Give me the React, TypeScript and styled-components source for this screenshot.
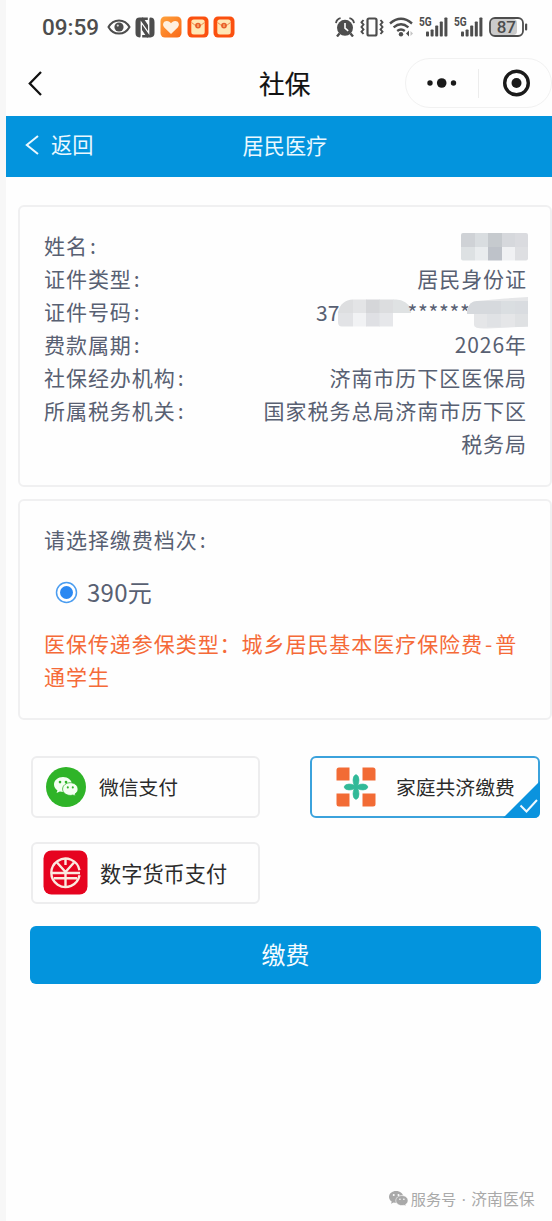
import React from 'react';
import styled, { createGlobalStyle } from 'styled-components';

const Global = createGlobalStyle`
  * { box-sizing: border-box; }
  html, body { margin: 0; padding: 0; background: #f7f7f7; }
  body { font-family: "Noto Sans CJK SC", sans-serif; overflow: hidden; }
  svg { display: block; flex: none; }
`;

const BLUE = '#0394dd';

const Page = styled.div`
  width: 546px;
  height: 1221px;
  margin-left: 6px;
  background: #fefefe;
  display: flex;
  flex-direction: column;
`;

const StatusBar = styled.div`
  height: 54px;
  flex: none;
  display: flex;
  align-items: center;
  justify-content: space-between;
  padding: 0 24px 0 36px;
`;

const StatusGroup = styled.div<{ $gap: number }>`
  display: flex;
  align-items: center;
  gap: ${(p) => p.$gap}px;
`;

const Clock = styled.span`
  font: 500 22.5px/28px Roboto, sans-serif;
  color: #4d4d4d;
  width: 60px;
  white-space: nowrap;
`;

const NavBar = styled.div`
  height: 62px;
  flex: none;
  display: grid;
  grid-template-columns: 231px auto 1fr;
  align-items: center;
  padding: 0 0 4px 22px;
`;

const NavTitle = styled.h1`
  margin: 0;
  font-size: 25.7px;
  font-weight: 400;
  -webkit-text-stroke: 0.2px #111;
  line-height: 36px;
  padding-bottom: 1px;
  color: #111;
`;

const Capsule = styled.div`
  justify-self: end;
  width: 147px;
  height: 50px;
  border: 1px solid #f1f1f1;
  border-radius: 25px;
  display: flex;
  align-items: center;
`;

const BlueBar = styled.div`
  height: 61px;
  flex: none;
  background: ${BLUE};
  color: #eaf8ff;
  display: grid;
  grid-template-columns: 236.5px auto 1fr;
  align-items: center;
  padding-bottom: 4px;
  font-size: 21.2px;
  line-height: 30px;
`;

const Back = styled.div`
  display: flex;
  align-items: center;
  gap: 12px;
  padding-left: 19px;
`;

const BackText = styled.span`
  padding-bottom: 1px;
`;

const Card = styled.section<{ $h: number; $top: number }>`
  height: ${(p) => p.$h}px;
  flex: none;
  margin: ${(p) => p.$top}px 0 0 12px;
  border: 2px solid #f0f0f1;
  border-radius: 6px;
  padding: 22px 23px 0 24px;
  color: #586072;
  font-size: 21px;
  letter-spacing: 0.95px;
  line-height: 33px;
`;

const InfoRow = styled.div<{ $lines?: number }>`
  display: flex;
  height: ${(p) => (p.$lines ?? 1) * 33}px;
  justify-content: space-between;
  align-items: flex-start;
`;

const Label = styled.span`
  white-space: nowrap;
`;

const Colon = styled.span`
  padding-left: 2px;
`;

const Value = styled.span`
  max-width: 272px;
  min-height: 33px;
  display: flex;
  align-items: center;
  text-align: right;
`;

const MaskedValue = styled.span`
  display: flex;
  align-items: center;
  margin-right: -1px;
  padding-top: 2px;
`;

const IdPrefix = styled.span`
  width: 22px;
  height: 33px;
  margin-top: -2px;
  letter-spacing: 0;
`;

const Stars = styled.span`
  width: 56px;
  height: 33px;
  margin-top: -2px;
  font-size: 21px;
  letter-spacing: 0.7px;
  white-space: nowrap;
  display: flex;
  justify-content: center;
`;

const RadioRow = styled.label`
  display: flex;
  align-items: center;
  gap: 9px;
  margin: 19px 0 18px 11px;
  height: 34px;
  font-size: 24px;
  letter-spacing: 0.3px;
`;

const RadioText = styled.span`
  padding-bottom: 2px;
`;

const Notice = styled.p`
  margin: 0 -3px 0 0;
  color: #f56a38;
`;

const Dash = styled.span`
  padding: 0 2px;
`;

const PayGrid = styled.div`
  flex: none;
  margin: 36px 12px 0 25px;
  display: grid;
  grid-template-columns: 229px 230px;
  justify-content: space-between;
  row-gap: 24px;
`;

const PayOption = styled.button<{ $selected?: boolean; $pad: number; $gap: number; $size: number }>`
  position: relative;
  height: 62px;
  border: 2px solid ${(p) => (p.$selected ? '#3ba2dc' : '#ededee')};
  border-radius: 6px;
  background: #fefefe;
  display: flex;
  align-items: center;
  gap: ${(p) => p.$gap}px;
  padding: 0 0 1px ${(p) => p.$pad}px;
  font-family: inherit;
  font-size: ${(p) => p.$size}px;
  line-height: 30px;
  color: #2b2b2b;
  white-space: nowrap;
`;

const Corner = styled.svg`
  position: absolute;
  right: -2px;
  bottom: -2px;
`;

const Submit = styled.button`
  flex: none;
  height: 58px;
  margin: 22px 11px 0 24px;
  border: 0;
  border-radius: 6px;
  background: ${BLUE};
  color: #f4fbff;
  font-family: inherit;
  font-size: 24px;
  line-height: 34px;
  padding: 0 0 3px;
`;

const Footer = styled.footer`
  margin-top: auto;
  display: flex;
  align-items: center;
  justify-content: flex-end;
  padding: 0 17.5px 9px 0;
  height: 36px;
  color: #a9a9a9;
  font-size: 15.2px;
  line-height: 24px;
`;

const AccountType = styled.span`
  padding: 0 0 1px 3px;
`;

const Account = styled.span`
  font-size: 15.8px;
`;

const Dot = styled.span`
  width: 15px;
  font-family: "Noto Sans", sans-serif;
  text-align: center;
`;

const Eye = () => (
  <svg width="24" height="18" viewBox="0 0 24 18" fill="none" stroke="#4d4d4d" strokeWidth="2">
    <path d="M1.500 9C4 4.500 7.500 2.400 12 2.400S20 4.500 22.500 9C20 13.500 16.500 15.600 12 15.600S4 13.500 1.500 9Z" />
    <circle cx="12" cy="9" r="4.600" fill="#4d4d4d" stroke="none" />
    <circle cx="10.800" cy="7.600" r="1.100" fill="#d8d8d8" stroke="none" />
  </svg>
);

const Nfc = () => (
  <svg width="20" height="21" viewBox="0 0 20 21" fill="#4d4d4d">
    <path d="M4.600 .6H8L14 9.600V2.200Q14 .6 15.400 .6Q19.500 .6 19.500 5V16Q19.500 20.400 15.400 20.400H12L6 11.400V18.800Q6 20.400 4.600 20.400Q.5 20.400 .5 16V5Q.5 .6 4.600 .6Z" />
    <path d="M6.300 20.600V5.500L13.700 16V.4" fill="none" stroke="#fff" strokeWidth="1.300" />
    <path d="M7 .6H12.800V3H8ZM13 20.400H7.200V18H12Z" />
  </svg>
);

const HeartApp = () => (
  <svg width="22" height="22" viewBox="0 0 22 22">
    <defs>
      <linearGradient id="heartBg" x1="0" y1="0" x2="1" y2="1">
        <stop offset="0" stopColor="#ffa23c" />
        <stop offset="1" stopColor="#f96818" />
      </linearGradient>
    </defs>
    <rect x=".5" y=".5" width="21" height="21" rx="4.500" fill="url(#heartBg)" />
    <path d="M11 18 4.300 11.500C1.800 8.500 3.500 5 6.800 5 8.800 5 10.200 6 11 7.300 11.800 6 13.200 5 15.200 5 18.500 5 20.200 8.500 17.700 11.500Z" fill="#fff0df" />
  </svg>
);

const PacketApp = () => (
  <svg width="22" height="22" viewBox="0 0 22 22">
    <rect x=".5" y=".5" width="21" height="21" rx="4.500" fill="#fb500f" />
    <rect x="4.300" y="3.500" width="13.400" height="15" rx="2.500" fill="#ffe7b5" />
    <path d="M4.500 6.500Q11 13 17.500 6.500" fill="none" stroke="#ee8a4b" strokeWidth="1" />
    <circle cx="11" cy="9.600" r="2.900" fill="#e8602c" />
    <path d="M11 8.200v2.800" stroke="#ffd58a" strokeWidth="1" />
  </svg>
);

const Alarm = () => (
  <svg width="20" height="20" viewBox="0 0 20 20">
    <circle cx="10" cy="10.800" r="8" fill="#4d4d4d" />
    <path d="M1 6.200Q1.500 2 5.600 1.200M19 6.200Q18.500 2 14.400 1.200" fill="none" stroke="#4d4d4d" strokeWidth="1.800" />
    <path d="M4.500 16.500 2 19.500M15.500 16.500 18 19.500" stroke="#4d4d4d" strokeWidth="2.400" />
    <path d="M10 6v5.200l3.200 2.600" fill="none" stroke="#fff" strokeWidth="1.600" />
  </svg>
);

const Vibrate = () => (
  <svg width="24" height="20" viewBox="0 0 24 20" fill="none" stroke="#4d4d4d">
    <rect x="7.500" y="1.500" width="9" height="17" rx="1.500" strokeWidth="2.200" />
    <path d="M3.500 3 1.500 5.300 3.500 7.600 1.500 10 3.500 12.400 1.500 14.700 3.500 17M20.500 3l2 2.300-2 2.300 2 2.400-2 2.400 2 2.300-2 2.300" strokeWidth="1.900" />
  </svg>
);

const Wifi = () => (
  <svg width="25" height="20" viewBox="0 0 25 20" fill="none" stroke="#4d4d4d" strokeWidth="2.400">
    <path d="M1 6.500Q12 -2.800 23 6.500M4.600 10.400Q12 4.200 19.400 10.400M8.200 14Q12 10.900 15.800 14" />
    <circle cx="12" cy="17.200" r="2.200" fill="#4d4d4d" stroke="none" />
    <path d="M20 13.500v6l-3-3Z" fill="#4d4d4d" stroke="none" />
    <path d="M21.500 14v5l2.500-2.500Z" fill="#c4c4c4" stroke="none" />
  </svg>
);

const Signal = () => (
  <svg width="30" height="30" viewBox="0 -5 30 30" fill="#4d4d4d">
    <text x="0" y="9.300" fontFamily="Roboto, sans-serif" fontWeight="700" fontSize="12.500" textLength="12.700" lengthAdjust="spacingAndGlyphs">5G</text>
    <rect x="7" y="14.500" width="3" height="5" rx=".8" />
    <rect x="11.600" y="12.500" width="3" height="7" rx=".8" />
    <rect x="16.200" y="8.500" width="3" height="11" rx=".8" />
    <rect x="20.800" y="4.500" width="3" height="15" rx=".8" />
    <rect x="25.400" y=".5" width="3" height="19" rx=".8" />
  </svg>
);

const Battery = () => (
  <svg width="39" height="20" viewBox="0 0 39 20">
    <rect x="2" y="2" width="26" height="16" rx="4" fill="#cbcbcb" />
    <rect x="1" y="1" width="33" height="18" rx="5" fill="none" stroke="#4d4d4d" strokeWidth="1.800" />
    <rect x="36" y="6.500" width="2.200" height="7" rx="1" fill="#4d4d4d" />
    <text x="17.300" y="15.900" textAnchor="middle" fontFamily="Roboto, sans-serif" fontWeight="500" fontSize="17" fill="#4d4d4d">87</text>
  </svg>
);

const Chevron = ({ w, h, color, sw }: { w: number; h: number; color: string; sw: number }) => (
  <svg width={w} height={h} viewBox={`0 0 ${w} ${h}`} fill="none" stroke={color} strokeWidth={sw}>
    <path d={`M${w - 1} 1 L1.800 ${h / 2} L${w - 1} ${h - 1}`} />
  </svg>
);

const NameMosaic = () => (
  <svg width="67" height="28" viewBox="0 0 67 28">
    <defs><clipPath id="nameClip"><rect width="67" height="27.500" rx="2" /></clipPath></defs>
    <g clipPath="url(#nameClip)" shapeRendering="crispEdges">
      {['#cfd2d6', '#d9dde0', '#c6cace', '#d6d8dc', '#dadbdf'].map((c, i) => (
        <rect key={i} x={i * 13.5} width="13.5" height="13.500" fill={c} />
      ))}
      {['#dde1e3', '#e9ecee', '#bec2c9', '#f0f1f3', '#dedfe2'].map((c, i) => (
        <rect key={i} x={i * 13.5} y="13.500" width="13.5" height="14" fill={c} />
      ))}
    </g>
  </svg>
);

const IdMosaicLeft = () => (
  <svg width="73" height="28" viewBox="0 0 73 28">
    <defs>
      <clipPath id="idLeft"><path d="M0 27V13Q3 1 15 .5H58Q69 1 73 10V14H55V27.500H4Q0 27.500 0 23Z" /></clipPath>
    </defs>
    <g clipPath="url(#idLeft)">
      <rect width="15" height="14" fill="#dddee0" /><rect x="15" width="13.500" height="14" fill="#e3e4e6" />
      <rect x="28" width="14" height="14" fill="#d5d6d9" /><rect x="41.500" width="14" height="14" fill="#dcdddf" />
      <rect x="55" width="18" height="14" fill="#dfe2e3" /><rect y="14" width="15" height="14" fill="#e2e3e6" />
      <rect x="15" y="14" width="13.500" height="14" fill="#f1f2f4" /><rect x="28" y="14" width="14" height="14" fill="#dfe0e4" />
      <rect x="41.500" y="14" width="14" height="14" fill="#e6e7ea" />
    </g>
  </svg>
);

const IdMosaicRight = () => (
  <svg width="61" height="32" viewBox="0 0 61 32">
    <defs>
      <clipPath id="idRight"><path d="M0 14Q2 4 10 4L38 1.500 61 0V29.500L20 31.500Q7 32 7 28V17H0Z" /></clipPath>
    </defs>
    <g clipPath="url(#idRight)">
      <rect width="62" height="32" fill="#e5e6e8" />
      <rect y="4" width="34" height="13" fill="#d6d9dd" /><rect x="34" y="4" width="14" height="13" fill="#dadee1" />
      <rect x="48" y="4" width="14" height="13" fill="#d9dce0" /><rect x="20" y="17" width="14" height="13" fill="#e0e2e5" />
      <rect x="48" y="17" width="14" height="13" fill="#dfe1e3" />
    </g>
  </svg>
);

const WechatGlyph = ({ w, fill, eye }: { w: number; fill: string; eye: string }) => (
  <svg width={w} height={w * 0.8} viewBox="0 0 24 19">
    <path d="M9 0C4 0 0 3.300 0 7.400 0 9.800 1.300 11.900 3.400 13.200L2.600 16 5.900 14.300C6.900 14.600 8 14.800 9 14.800 14 14.800 18 11.500 18 7.400S14 0 9 0Z" fill={fill} />
    <circle cx="6" cy="5" r="1.300" fill={eye} /><circle cx="12" cy="5" r="1.300" fill={eye} />
    <path d="M16.300 5.600C12 5.600 8.600 8.500 8.600 12S12 18.300 16.300 18.300C17.200 18.300 18.100 18.200 18.900 17.900L21.600 19 21 16.900C22.900 15.800 24 14 24 12 24 8.500 20.500 5.600 16.300 5.600Z" fill={fill} stroke={eye} strokeWidth=".8" />
    <circle cx="13.800" cy="10.300" r="1.050" fill={eye} /><circle cx="18.800" cy="10.300" r="1.050" fill={eye} />
  </svg>
);

const WechatBadge = styled.span`
  width: 40px;
  height: 40px;
  border-radius: 50%;
  background: #2fb428;
  display: flex;
  align-items: center;
  justify-content: center;
`;

const FamilyIcon = () => (
  <svg width="40" height="40" viewBox="0 0 40 40">
    <g fill="#f26b35">
      <path d="M3 .5H13.500V13.500H.5V3Q.5 .5 3 .5Z" />
      <path d="M26.500 .5H37Q39.500 .5 39.500 3V13.500H26.500Z" />
      <path d="M.5 26.500H13.500V39.500H3Q.5 39.500 .5 37Z" />
      <path d="M26.500 26.500H39.500V37Q39.500 39.500 37 39.500H26.500Z" />
    </g>
    <path
      d="M20 7.500Q23 8.500 23 13Q23 16 21.800 18.200Q24 17 27 17Q31 17 32 20Q31 23 27 23Q24 23 21.800 21.800Q23 24 23 27Q23 31.500 20 32.500Q17 31.500 17 27Q17 24 18.200 21.800Q16 23 13 23Q9 23 8 20Q9 17 13 17Q16 17 18.200 18.200Q17 16 17 13Q17 8.500 20 7.500Z"
      fill="#31b998"
      stroke="#31b998"
      strokeWidth=".6"
    />
  </svg>
);

const DigitalYuan = () => (
  <svg width="45" height="45" viewBox="0 0 45 45">
    <rect x=".5" y=".5" width="44" height="44" rx="8" fill="#e6031f" />
    <g fill="none" stroke="#fbe9df" strokeWidth="2.400">
      <path d="M36.500 20.300A14.200 14.200 0 1 0 36.500 25.300" />
      <path d="M14 12.500 22.500 22 31 12.500M22.500 8.500V15M22.500 21V36M8 23H37M11 28.300H34" />
    </g>
  </svg>
);

const INFO: { label: string; value: React.ReactNode; lines?: number }[] = [
  {
    label: '姓名',
    value: (
      <MaskedValue>
        <NameMosaic />
      </MaskedValue>
    ),
  },
  { label: '证件类型', value: '居民身份证' },
  {
    label: '证件号码',
    value: (
      <MaskedValue>
        <IdPrefix>37</IdPrefix>
        <IdMosaicLeft />
        <Stars>******</Stars>
        <IdMosaicRight />
      </MaskedValue>
    ),
  },
  { label: '费款属期', value: '2026年' },
  { label: '社保经办机构', value: '济南市历下区医保局' },
  { label: '所属税务机关', value: '国家税务总局济南市历下区税务局', lines: 2 },
];

export default function App() {
  return (
    <Page>
      <Global />
      <StatusBar>
        <StatusGroup $gap={4.7}>
          <Clock>09:59</Clock>
          <Eye />
          <Nfc />
          <HeartApp />
          <PacketApp />
          <PacketApp />
        </StatusGroup>
        <StatusGroup $gap={5}>
          <Alarm />
          <Vibrate />
          <Wifi />
          <Signal />
          <Signal />
          <Battery />
        </StatusGroup>
      </StatusBar>

      <NavBar>
        <Chevron w={14} h={25} color="#111" sw={2.3} />
        <NavTitle>社保</NavTitle>
        <Capsule>
          <svg width="145" height="48" viewBox="0 0 145 48" fill="#1a1a1a">
            <circle cx="24" cy="24" r="2.700" />
            <circle cx="35.700" cy="24" r="4.800" />
            <circle cx="47.500" cy="24" r="2.700" />
            <path d="M72.500 10V39" stroke="#ececec" strokeWidth="1" />
            <circle cx="110.500" cy="24" r="11.800" fill="none" stroke="#1a1a1a" strokeWidth="3.400" />
            <circle cx="110.500" cy="24" r="5" />
          </svg>
        </Capsule>
      </NavBar>

      <BlueBar>
        <Back>
          <Chevron w={14} h={20} color="#eaf8ff" sw={2} />
          <BackText>返回</BackText>
        </Back>
        <span>居民医疗</span>
      </BlueBar>

      <Card $h={282} $top={28}>
        {INFO.map((row) => (
          <InfoRow key={row.label} $lines={row.lines}>
            <Label>
              {row.label}
              <Colon>:</Colon>
            </Label>
            <Value>{row.value}</Value>
          </InfoRow>
        ))}
      </Card>

      <Card $h={221} $top={12}>
        <Label>
          请选择缴费档次<Colon>:</Colon>
        </Label>
        <RadioRow>
          <svg width="23" height="23" viewBox="0 0 23 23">
            <circle cx="11.500" cy="11.500" r="10" fill="#fff" stroke="#4b9df0" strokeWidth="1.500" />
            <circle cx="11.500" cy="11.500" r="6.500" fill="#2a88f2" />
          </svg>
          <RadioText>390元</RadioText>
        </RadioRow>
        <Notice>
          医保传递参保类型：城乡居民基本医疗保险费<Dash>-</Dash>普通学生
        </Notice>
      </Card>

      <PayGrid>
        <PayOption $pad={13} $gap={13} $size={19.8}>
          <WechatBadge>
            <WechatGlyph w={24} fill="#f4fff2" eye="#2fb428" />
          </WechatBadge>
          微信支付
        </PayOption>
        <PayOption $selected $pad={24} $gap={20} $size={19.8}>
          <FamilyIcon />
          家庭共济缴费
          <Corner width="37" height="37" viewBox="0 0 37 37">
            <path d="M37 0V31Q37 37 31 37H0Z" fill="#0b93de" />
            <path d="M17.500 24.500 23.500 30.500 34 19" fill="none" stroke="#eef9ff" strokeWidth="2" />
          </Corner>
        </PayOption>
        <PayOption $pad={10} $gap={12} $size={21.2}>
          <DigitalYuan />
          数字货币支付
        </PayOption>
      </PayGrid>

      <Submit>缴费</Submit>

      <Footer>
        <WechatGlyph w={19} fill="#a9a9a9" eye="#fefefe" />
        <AccountType>服务号</AccountType>
        <Dot>·</Dot>
        <Account>济南医保</Account>
      </Footer>
    </Page>
  );
}
